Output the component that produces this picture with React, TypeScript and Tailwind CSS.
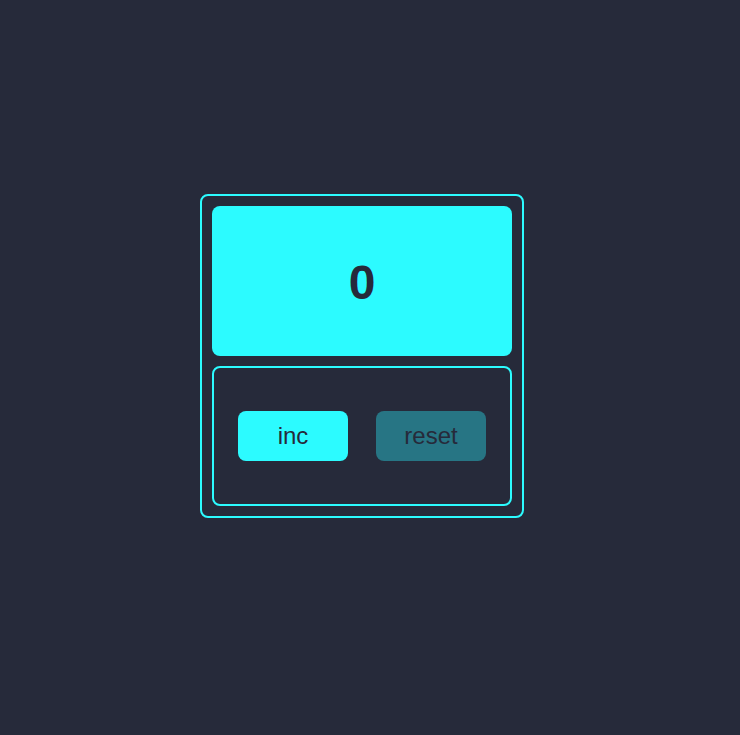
import React, { useState } from 'react';

export default function App() {
  const [count, setCount] = useState(0);

  return (
    <div className="min-h-screen w-full bg-[#262a3a] flex items-center justify-center font-['Liberation_Sans',Arial,sans-serif] pb-[23px] pr-[16px]">
      <div className="w-[324px] border-2 border-[#2cfbff] rounded-lg p-[10px] flex flex-col gap-[10px]">
        <div className="h-[150px] rounded-lg bg-[#2cfbff] flex items-center justify-center">
          <span className="text-[48px] font-bold text-[#262a3a] leading-none pt-[4px]">{count}</span>
        </div>
        <div className="h-[140px] border-2 border-[#2cfbff] rounded-lg flex items-center justify-center gap-[28px]">
          <button
            onClick={() => setCount(count + 1)}
            className="w-[110px] h-[50px] rounded-lg bg-[#2cfbff] text-[#262a3a] text-[24px]"
          >
            inc
          </button>
          <button
            onClick={() => setCount(0)}
            className="w-[110px] h-[50px] rounded-lg bg-[#277584] text-[#262a3a] text-[24px]"
          >
            reset
          </button>
        </div>
      </div>
    </div>
  );
}
